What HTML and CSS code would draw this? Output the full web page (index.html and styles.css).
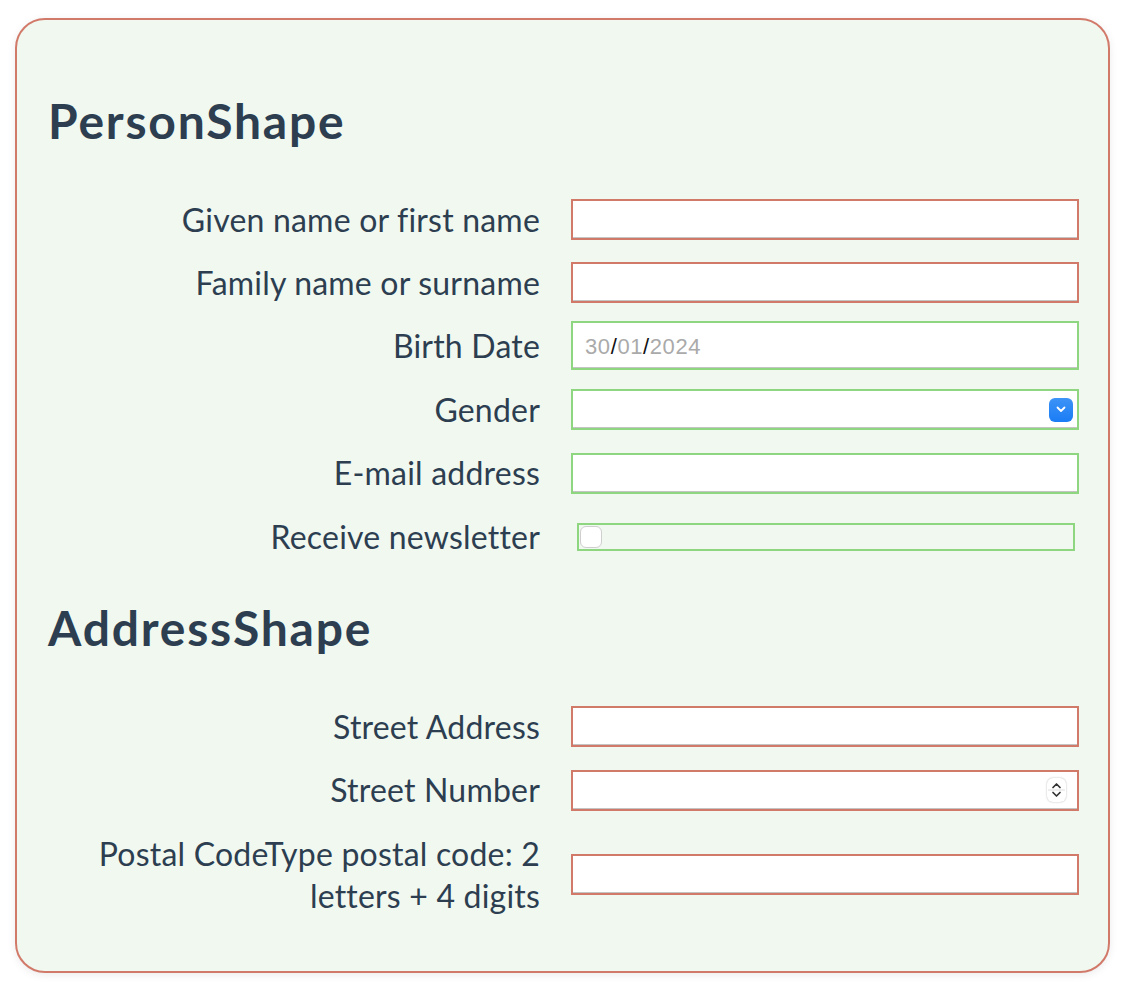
FILE: index.html
```html
<!DOCTYPE html>
<html lang="en">
  <head>
    <meta charset="utf-8" />
    <meta name="viewport" content="width=device-width, initial-scale=1.0" />
    <title>Shape form</title>
    <link rel="stylesheet" href="styles.css">
  </head>
  <body>
    <div class="shape-card">
      <h2 class="shape-title">PersonShape</h2>
      <div class="field-row">
        <label class="field-label">Given name or first name</label>
        <input class="field-input invalid" type="text" />
      </div>
      <div class="field-row">
        <label class="field-label">Family name or surname</label>
        <input class="field-input invalid" type="text" />
      </div>
      <div class="field-row">
        <label class="field-label">Birth Date</label>
        <div class="field-input valid date-input">
          <span class="date-part">30</span><span class="date-sep">/</span><span class="date-part">01</span><span class="date-sep">/</span><span class="date-part">2024</span>
        </div>
      </div>
      <div class="field-row">
        <label class="field-label">Gender</label>
        <div class="field-input valid select-input">
          <span class="select-button">
            <svg width="10" height="7" viewBox="0 0 10 7"><path d="M1.5 1.5 L5 5 L8.5 1.5" fill="none" stroke="#fff" stroke-width="1.8" stroke-linecap="round" stroke-linejoin="round"/></svg>
          </span>
        </div>
      </div>
      <div class="field-row">
        <label class="field-label">E-mail address</label>
        <input class="field-input valid" type="email" />
      </div>
      <div class="field-row">
        <label class="field-label">Receive newsletter</label>
        <div class="checkbox-wrap">
          <span class="checkbox-box"></span>
        </div>
      </div>

      <h2 class="shape-title address-title">AddressShape</h2>
      <div class="field-row">
        <label class="field-label">Street Address</label>
        <input class="field-input invalid" type="text" />
      </div>
      <div class="field-row">
        <label class="field-label">Street Number</label>
        <div class="field-input invalid number-input">
          <span class="stepper">
            <svg width="19" height="24" viewBox="0 0 19 24">
              <path d="M6 9.5 L9.5 6 L13 9.5" fill="none" stroke="#333" stroke-width="1.7" stroke-linecap="round" stroke-linejoin="round"/>
              <line x1="1" y1="12" x2="18" y2="12" stroke="#dddddd" stroke-width="1"/>
              <path d="M6 14.5 L9.5 18 L13 14.5" fill="none" stroke="#333" stroke-width="1.7" stroke-linecap="round" stroke-linejoin="round"/>
            </svg>
          </span>
        </div>
      </div>
      <div class="field-row last-row">
        <label class="field-label">Postal CodeType postal code: 2 letters + 4 digits</label>
        <input class="field-input invalid" type="text" />
      </div>
    </div>
  </body>
</html>
```

FILE: styles.css
```css
body {
  margin: 0;
  padding: 18px 20px 25px 15px;
  background-color: #ffffff;
  font-family: "Lato", "Liberation Sans", sans-serif;
  color: #2c3e50;
}

.shape-card {
  background-color: #f1f8f0;
  border: 2px solid #d27a6a;
  border-radius: 30px;
  box-shadow: 0 2px 8px rgba(0, 0, 0, 0.08);
  padding: 72px 29px 54px 31px;
}

.shape-title {
  font-size: 48px;
  font-weight: 700;
  letter-spacing: 1.8px;
  line-height: 58px;
  margin: 0 0 48.6px 0;
}

/* margins collapse with the row above, so this is the full gap */
.address-title {
  margin-top: 41.6px;
}

.field-row {
  display: grid;
  grid-template-columns: 492px 508px;
  column-gap: 31px;
  align-items: center;
  margin-bottom: 21.4px;
}

.last-row {
  margin-bottom: 0;
}

.field-label {
  text-align: right;
  font-size: 32px;
  letter-spacing: 0.2px;
  line-height: 42px;
}

.field-input {
  box-sizing: border-box;
  height: 41px;
  width: 508px;
  margin: 0;
  background-color: #ffffff;
  border: 2px solid;
  box-shadow: inset 0 -1px 0 #c4c4c4;
  font: inherit;
  padding: 0 12px;
}

.invalid {
  border-color: #d27a6a;
}

.valid {
  border-color: #8ed680;
}

.date-input {
  height: 49px;
  margin: -4px 0 -3px 0;
  display: flex;
  align-items: center;
  padding-top: 3px;
  font-family: "Liberation Sans", sans-serif;
  font-size: 22px;
  letter-spacing: 0.6px;
}

.date-part {
  color: #aaaaaa;
}

.date-sep {
  color: #111111;
}

.select-input {
  display: flex;
  align-items: center;
  justify-content: flex-end;
  padding-right: 4px;
}

.select-button {
  width: 24px;
  height: 24px;
  border-radius: 6px;
  background: linear-gradient(#3d93f6, #1a7cf5);
  display: flex;
  align-items: center;
  justify-content: center;
}

.number-input {
  display: flex;
  align-items: center;
  justify-content: flex-end;
  padding-right: 11px;
}

.stepper {
  display: flex;
  width: 19px;
  height: 24px;
  border-radius: 6px;
  background-color: #ffffff;
  box-shadow: 0 0 2px rgba(0, 0, 0, 0.3);
}

.checkbox-wrap {
  box-sizing: border-box;
  width: 498px;
  height: 28px;
  margin-left: 6px;
  border: 2px solid #8ed680;
  display: flex;
  align-items: center;
}

.checkbox-box {
  width: 22px;
  height: 22px;
  box-sizing: border-box;
  margin-left: 1px;
  border: 1px solid #cfcfcf;
  border-radius: 6px;
  background-color: #ffffff;
}
```
